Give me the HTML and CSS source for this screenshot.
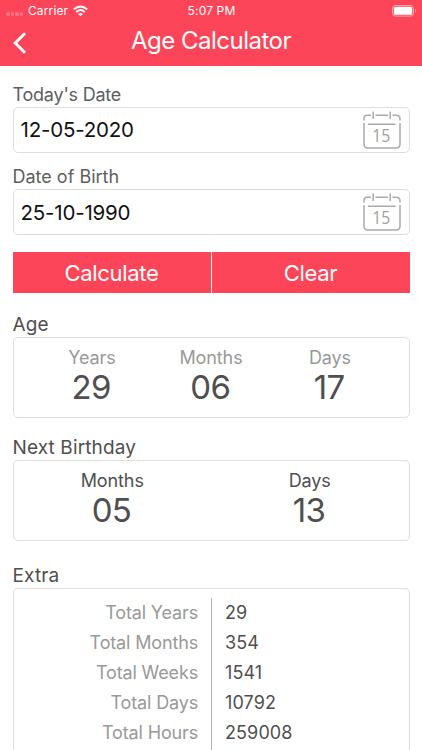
FILE: index.html
```html
<!DOCTYPE html>
<html lang="en">
<head>
<meta charset="utf-8">
<title>Age Calculator</title>
<link rel="stylesheet" href="styles.css">
</head>
<body>
<header class="header">
  <div class="status">
    <div class="carrier">
      <span class="signal"><i></i><i></i><i></i><i></i></span>
      <span class="carrier-name">Carrier</span>
      <svg class="wifi" width="15" height="12" viewBox="0 0 15 12" fill="none" stroke="#fff" stroke-width="1.9"><path d="M.8 4.4Q7.5-1.5 14.2 4.4M3.2 7Q7.5 3.2 11.8 7"/><path d="M5.1 8.9Q7.5 7 9.9 8.9L7.5 11.3Z" fill="#fff" stroke="none"/></svg>
    </div>
    <span class="time">5:07 PM</span>
    <svg class="battery" width="25" height="12" viewBox="0 0 25 12"><rect x=".5" y=".5" width="21" height="10.6" rx="2.8" fill="none" stroke="#ffa3ad"/><rect x="1.8" y="1.8" width="18.4" height="8" rx="1.6" fill="#fff"/><path d="M23 4v3.8c1.6-.5 1.6-3.3 0-3.8Z" fill="#ffa3ad"/></svg>
  </div>
  <div class="nav">
    <svg class="back" width="14" height="24" viewBox="0 0 14 24" fill="none" stroke="#fff" stroke-width="2.9"><path d="M12 2.2 2.2 12l9.8 9.8"/></svg>
    <h1 class="title">Age Calculator</h1>
  </div>
</header>
<main class="content">
  <label class="label label-today">Today's Date</label>
  <div class="input input-today"><span class="date-today">12-05-2020</span>
    <svg class="calendar" width="38" height="38" viewBox="0 0 38 38" fill="none" stroke="#aaa" stroke-width="1.5"><path d="M1 9.5V7Q1 4.2 4 4.2H8M12.5 4.2H25M29.5 4.2H33Q37 4.2 37 8V9.5M10.2 .5V8M27.2 .5V8M5 13.3H32.5M1 12V33Q1 37 5 37H33Q37 37 37 33V12"/><text class="calendar-day" x="9.3" y="31" textLength="18" lengthAdjust="spacingAndGlyphs">15</text></svg>
  </div>
  <label class="label label-birth">Date of Birth</label>
  <div class="input input-birth"><span class="date-birth">25-10-1990</span>
    <svg class="calendar" width="38" height="38" viewBox="0 0 38 38" fill="none" stroke="#aaa" stroke-width="1.5"><path d="M1 9.5V7Q1 4.2 4 4.2H8M12.5 4.2H25M29.5 4.2H33Q37 4.2 37 8V9.5M10.2 .5V8M27.2 .5V8M5 13.3H32.5M1 12V33Q1 37 5 37H33Q37 37 37 33V12"/><text class="calendar-day" x="9.3" y="31" textLength="18" lengthAdjust="spacingAndGlyphs">15</text></svg>
  </div>
  <div class="buttons"><button class="button">Calculate</button><button class="button">Clear</button></div>
  <h2 class="label heading label-age">Age</h2>
  <section class="card card-age">
    <div class="stat"><span class="unit">Years</span><span class="value">29</span></div>
    <div class="stat"><span class="unit">Months</span><span class="value">06</span></div>
    <div class="stat"><span class="unit">Days</span><span class="value">17</span></div>
  </section>
  <h2 class="label heading label-next">Next Birthday</h2>
  <section class="card card-next">
    <div class="stat"><span class="unit">Months</span><span class="value">05</span></div>
    <div class="stat"><span class="unit">Days</span><span class="value">13</span></div>
  </section>
  <h2 class="label heading label-extra">Extra</h2>
  <section class="extra">
    <div class="names"><span>Total Years</span><span>Total Months</span><span>Total Weeks</span><span>Total Days</span><span>Total Hours</span></div>
    <div class="totals"><span>29</span><span>354</span><span>1541</span><span>10792</span><span>259008</span></div>
  </section>
</main>
</body>
</html>
```
FILE: styles.css
```css
* { box-sizing: border-box; }
html, body { margin: 0; height: 750px; overflow: hidden; }
body { background: #fff; color: #4f4f4f; font-family: Inter, "Liberation Sans", sans-serif; }
h1, h2 { margin: 0; font-weight: 400; }

.header { height: 65.5px; background: #fc4558; color: #fff; }
.status { display: grid; grid-template-columns: 1fr auto 1fr; height: 21px; padding: 0 5px 0 6px; align-items: center; font-size: 12px; line-height: 21px; }
.carrier { display: flex; align-items: center; }
.signal { display: flex; gap: 1px; padding-top: 7px; }
.signal i { width: 3.6px; height: 3.6px; border-radius: 50%; background: #fd7482; }
.carrier-name { margin-left: 4.5px; letter-spacing: .15px; }
.wifi { margin-left: 5px; }
.time { letter-spacing: .15px; }
.battery { justify-self: end; }
.nav { display: grid; grid-template-columns: 40px 1fr 40px; height: 42px; align-items: center; }
.back { margin: 2px 0 0 12.5px; }
.title { font-size: 24px; line-height: 40px; text-align: center; letter-spacing: -.5px; margin-top: -2px; }

.content { padding: 0 12.5px; }
.label { display: block; font-size: 18px; line-height: 25px; height: 25px; }
.label-today { margin-top: 16px; color: #5e5e5e; letter-spacing: -.22px; }
.label-birth { margin-top: 11.5px; color: #5e5e5e; }
.input { display: flex; align-items: center; justify-content: space-between; height: 46px; padding: 0 8px 0 7px; border: 1px solid #dedede; border-radius: 5px; color: #111; font-size: 20.5px; letter-spacing: -.2px; }
.calendar-day { fill: #a0a0a0; stroke: none; font: 400 17.5px "Open Sans", sans-serif; letter-spacing: 0; }
.buttons { display: grid; grid-template-columns: 1fr 1fr; gap: 1px; height: 41px; margin-top: 17px; }
.button { border: 0; padding: 0; background: #fc4558; color: #fff; font: 400 22px Inter, sans-serif; letter-spacing: -.3px; }
.heading { font-size: 19px; letter-spacing: .12px; }
.label-age { margin-top: 19px; }
.label-next { margin-top: 17px; }
.label-extra { margin-top: 22px; }
.card { display: flex; height: 81px; padding-top: 7px; border: 1px solid #dedede; border-radius: 5px; }
.card-age { padding-left: 19px; padding-right: 19px; }
.stat { display: flex; flex: 1; flex-direction: column; align-items: center; }
.unit { font-size: 18px; line-height: 25px; letter-spacing: -.1px; }
.card-age .unit { color: #999; }
.value { margin-right: 1.5px; font-size: 33px; line-height: 35px; letter-spacing: -.6px; }
.extra { display: grid; grid-template-columns: 198px 1fr; height: 180px; padding-top: 9px; border: 1px solid #dedede; border-radius: 5px; font-size: 18px; line-height: 30px; }
.names, .totals { display: flex; flex-direction: column; }
.names { align-items: flex-end; padding-right: 12.5px; color: #999; letter-spacing: -.15px; border-right: 1px solid #b5b5b5; }
.totals { padding-left: 13.5px; letter-spacing: .1px; }
```
